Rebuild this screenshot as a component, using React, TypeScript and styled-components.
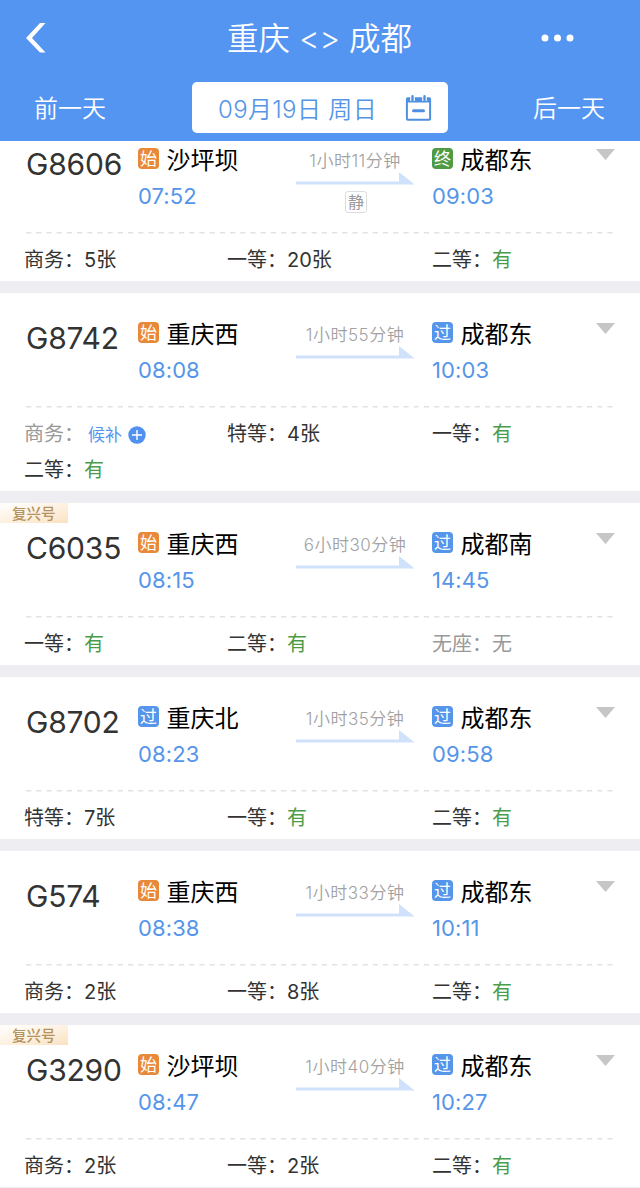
import React from "react";
import styled, { createGlobalStyle } from "styled-components";

const GlobalStyle = createGlobalStyle`
  * { box-sizing: border-box; }
  body {
    margin: 0;
    background: #fff;
    font-family: Inter, "Noto Sans CJK SC", sans-serif;
    color: #333;
  }
`;

const Page = styled.div`
  width: 640px;
  height: 1188px;
  overflow: hidden;
  display: flex;
  flex-direction: column;
  background: #fff;
`;

const Header = styled.header`
  flex: none;
  height: 141px;
  background: #5595f2;
  color: #fff;
`;

const TitleBar = styled.div`
  height: 82px;
  padding: 0 65px 6px 25px;
  display: grid;
  grid-template-columns: 96px 1fr 96px;
  align-items: center;
`;

const Title = styled.h1`
  margin: 0;
  padding: 2px 0 0 39px;
  text-align: center;
  font-size: 31.5px;
  font-weight: 350;
  line-height: 40px;
  white-space: nowrap;
`;

const MoreIcon = styled.svg`
  justify-self: end;
`;

const DateBar = styled.div`
  height: 51px;
  display: grid;
  grid-template-columns: 192px 256px 192px;
  align-items: center;
`;

const DayLink = styled.span<{ $end?: boolean }>`
  padding: ${(p) => (p.$end ? "3px 35px 0 0" : "3px 0 0 34px")};
  text-align: ${(p) => (p.$end ? "right" : "left")};
  font-size: 24px;
  font-weight: 350;
  line-height: 34px;
`;

const DateButton = styled.div`
  height: 51px;
  padding: 0 16px 0 26px;
  border-radius: 5px;
  display: flex;
  align-items: center;
  justify-content: space-between;
  background: #fff;
  color: #5595e8;
  font-size: 24px;
  font-weight: 350;
  white-space: nowrap;
`;

const DateText = styled.span`
  margin-top: -1px;
  letter-spacing: 0.35px;
`;

const List = styled.main`
  flex: 1;
  min-height: 0;
  overflow: hidden;
`;

const Card = styled.section<{ $clipped?: boolean }>`
  margin-top: ${(p) => (p.$clipped ? "-22px" : "0")};
  border-bottom: 12px solid #ededf2;
  background: #fff;
`;

const Trip = styled.div`
  position: relative;
  height: 113px;
  margin: 0 25px;
  display: grid;
  grid-template-columns: 113px 158px 118px 18px 1fr 19px;
  align-items: start;
`;

const Ribbon = styled.span`
  position: absolute;
  left: -25px;
  top: 0;
  width: 68px;
  height: 20px;
  padding-left: 12px;
  background: linear-gradient(165deg, #fffdfa 10%, #fdf0de 55%, #fae2c2 100%);
  color: #b3925f;
  font-size: 14.5px;
  font-weight: 500;
  line-height: 21px;
  white-space: nowrap;
`;

const TrainNo = styled.div`
  padding: 25px 0 0 1px;
  font-size: 30px;
  font-weight: 370;
  line-height: 40px;
  letter-spacing: -0.2px;
  color: #333;
`;

const Stop = styled.div`
  padding-top: 25px;
`;

const StopName = styled.div`
  height: 32px;
  display: flex;
  align-items: center;
  gap: 7.5px;
  color: #000;
  font-size: 24px;
  line-height: 32px;
  white-space: nowrap;
`;

const StationName = styled.span`
  padding-top: 2px;
`;

const markColors = { 始: "#e8893a", 终: "#4f9a45", 过: "#5595ea" };
type Mark = keyof typeof markColors;

const StopMark = styled.span<{ $mark: Mark }>`
  width: 21px;
  height: 21px;
  margin-bottom: 4px;
  border-radius: 4px;
  background: ${(p) => markColors[p.$mark]};
  color: #fff;
  font-size: 17px;
  line-height: 22px;
  text-align: center;
`;

const Time = styled.div`
  margin-top: 4px;
  color: #5595ea;
  font-size: 22px;
  font-weight: 370;
  line-height: 32px;
  letter-spacing: 0.1px;
`;

const Journey = styled.div`
  padding-top: 31px;
  display: flex;
  flex-direction: column;
  align-items: center;
`;

const Duration = styled.span`
  height: 22px;
  color: #a2a2a2;
  font-size: 17px;
  font-weight: 350;
  line-height: 22px;
  letter-spacing: 0.5px;
  white-space: nowrap;
`;

const QuietTag = styled.span`
  width: 22px;
  height: 22px;
  margin: 6px 0 0 2px;
  border: 1px solid #ddd;
  border-radius: 3px;
  color: #999;
  font-size: 16px;
  line-height: 20px;
  text-align: center;
`;

const Expand = styled.svg`
  margin-top: 30px;
  grid-column: 6;
`;

const Divider = styled.svg`
  display: block;
  margin: 0 25px;
`;

const Seats = styled.div`
  padding: 8px 24px 3.5px;
  display: grid;
  grid-template-columns: 203px 205px 1fr;
  grid-auto-rows: 36px;
`;

const Seat = styled.div<{ $muted?: boolean }>`
  display: flex;
  align-items: center;
  color: ${(p) => (p.$muted ? "#999" : "#333")};
  font-size: 20px;
  line-height: 36px;
  white-space: nowrap;
`;

const Available = styled.span`
  color: #4a9c48;
`;

const Waitlist = styled.span`
  padding: 2px 0 0 4px;
  display: flex;
  align-items: center;
  gap: 6px;
  color: #5595f0;
  font-size: 17px;
`;

type SeatInfo = [string, string];
interface Train {
  no: string;
  from: [Mark, string, string];
  to: [Mark, string, string];
  duration: string;
  seats: SeatInfo[];
  fuxing?: boolean;
  quiet?: boolean;
}

const trains: Train[] = [
  { no: "G8606", from: ["始", "沙坪坝", "07:52"], to: ["终", "成都东", "09:03"], duration: "1小时11分钟", quiet: true, seats: [["商务", "5张"], ["一等", "20张"], ["二等", "有"]] },
  { no: "G8742", from: ["始", "重庆西", "08:08"], to: ["过", "成都东", "10:03"], duration: "1小时55分钟", seats: [["商务", "候补"], ["特等", "4张"], ["一等", "有"], ["二等", "有"]] },
  { no: "C6035", from: ["始", "重庆西", "08:15"], to: ["过", "成都南", "14:45"], duration: "6小时30分钟", fuxing: true, seats: [["一等", "有"], ["二等", "有"], ["无座", "无"]] },
  { no: "G8702", from: ["过", "重庆北", "08:23"], to: ["过", "成都东", "09:58"], duration: "1小时35分钟", seats: [["特等", "7张"], ["一等", "有"], ["二等", "有"]] },
  { no: "G574", from: ["始", "重庆西", "08:38"], to: ["过", "成都东", "10:11"], duration: "1小时33分钟", seats: [["商务", "2张"], ["一等", "8张"], ["二等", "有"]] },
  { no: "G3290", from: ["始", "沙坪坝", "08:47"], to: ["过", "成都东", "10:27"], duration: "1小时40分钟", fuxing: true, seats: [["商务", "2张"], ["一等", "2张"], ["二等", "有"]] },
];

function StopInfo({ stop }: { stop: [Mark, string, string] }) {
  const [mark, name, time] = stop;
  return (
    <Stop>
      <StopName>
        <StopMark $mark={mark}>{mark}</StopMark>
        <StationName>{name}</StationName>
      </StopName>
      <Time>{time}</Time>
    </Stop>
  );
}

function SeatValue({ value }: { value: string }) {
  if (value === "有") return <Available>有</Available>;
  if (value === "候补")
    return (
      <Waitlist>
        候补
        <svg width="18" height="18" viewBox="0 0 18 18">
          <circle cx="9" cy="9" r="8.7" fill="#4f90f0" />
          <path d="M9 4v10M4 9h10" stroke="#fff" strokeWidth="1.4" />
        </svg>
      </Waitlist>
    );
  return <span>{value}</span>;
}

function TrainCard({ train, clipped }: { train: Train; clipped?: boolean }) {
  return (
    <Card $clipped={clipped}>
      <Trip>
        {train.fuxing && <Ribbon>复兴号</Ribbon>}
        <TrainNo>{train.no}</TrainNo>
        <StopInfo stop={train.from} />
        <Journey>
          <Duration>{train.duration}</Duration>
          <svg width="118" height="13" viewBox="0 0 118 13">
            <path d="M0 9.500H103V0L118.500 12.500H0z" fill="#cfe1fb" />
          </svg>
          {train.quiet && <QuietTag>静</QuietTag>}
        </Journey>
        <span />
        <StopInfo stop={train.to} />
        <Expand width="19" height="11" viewBox="0 0 19 11">
          <path d="M0 0H19L9.500 11z" fill="#c6c6c6" />
        </Expand>
      </Trip>
      <Divider width="590" height="1.500" viewBox="0 0 590 1.5">
        <path d="M1 .75H590" stroke="#e2e2e2" strokeWidth="1.5" strokeDasharray="5.200 5" />
      </Divider>
      <Seats>
        {train.seats.map(([name, value]) => (
          <Seat key={name} $muted={value === "候补" || value === "无"}>
            <span>{name}：</span>
            <SeatValue value={value} />
          </Seat>
        ))}
      </Seats>
    </Card>
  );
}

export default function App() {
  return (
    <Page>
      <GlobalStyle />
      <Header>
        <TitleBar>
          <svg width="22" height="32" viewBox="0 0 22 32">
            <path d="M15 1H20.500L7 16L20.500 30.500H15L1 16z" fill="#fff" />
          </svg>
          <Title>重庆 &lt;&gt; 成都</Title>
          <MoreIcon width="34" height="8" viewBox="0 0 34 8">
            <circle cx="4" cy="4" r="3.500" fill="#fff" />
            <circle cx="16.500" cy="4" r="3.500" fill="#fff" />
            <circle cx="29" cy="4" r="3.500" fill="#fff" />
          </MoreIcon>
        </TitleBar>
        <DateBar>
          <DayLink>前一天</DayLink>
          <DateButton>
            <DateText>09月19日 周日</DateText>
            <svg width="27" height="26" viewBox="0 0 27 26" fill="none">
              <rect x="1.900" y="3.500" width="23.200" height="21.300" rx="1" stroke="#4f90e2" strokeWidth="2" />
              <path d="M1.500 2.500H25.500V7.500H1.500z" fill="#4f90e2" />
              <path d="M7.500 0V6M19.500 0V6" stroke="#fff" strokeWidth="4.600" />
              <path d="M7.500 1.300V5.500M19.500 1.300V5.500" stroke="#4f90e2" strokeWidth="2.400" strokeLinecap="round" />
              <path d="M8.500 15.700H18.500" stroke="#4f90e2" strokeWidth="3" strokeLinecap="round" />
            </svg>
          </DateButton>
          <DayLink $end>后一天</DayLink>
        </DateBar>
      </Header>
      <List>
        {trains.map((train, i) => (
          <TrainCard key={train.no} train={train} clipped={i === 0} />
        ))}
      </List>
    </Page>
  );
}
